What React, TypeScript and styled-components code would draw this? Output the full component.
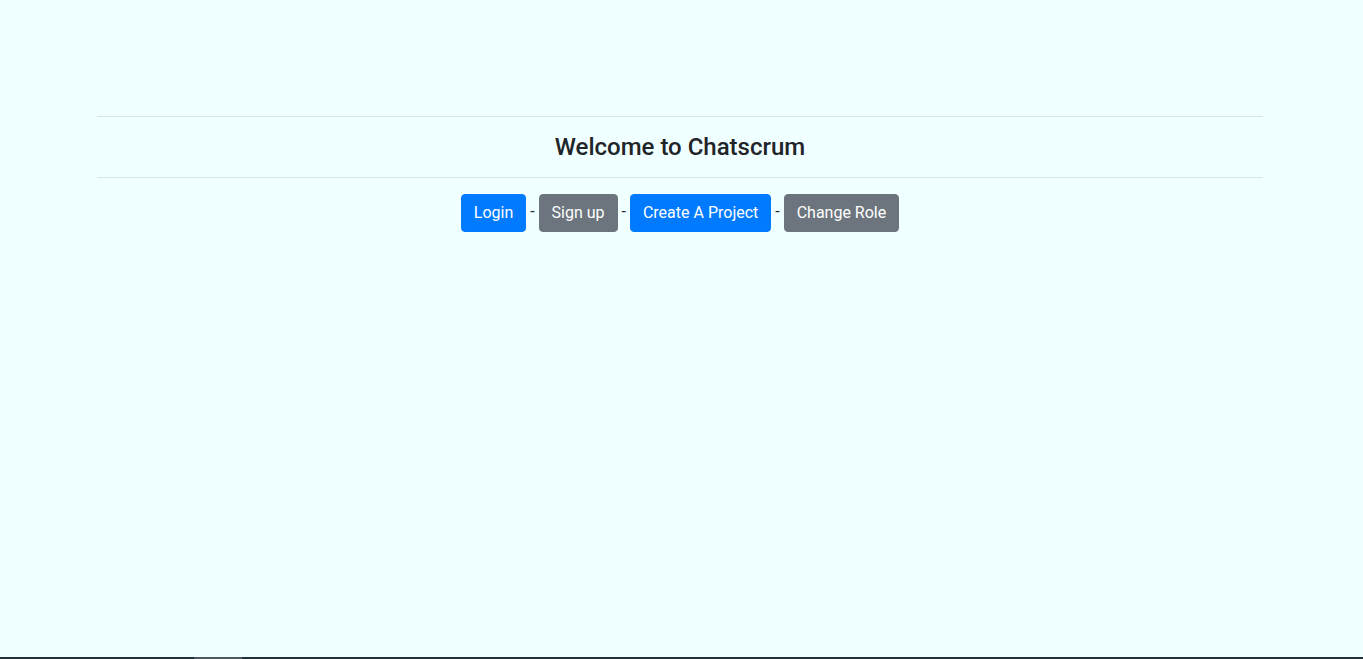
import React from "react";
import styled, { createGlobalStyle } from "styled-components";

const Global = createGlobalStyle`
  html, body { margin: 0; padding: 0; }
  body {
    background: #f0ffff;
    font-family: Roboto, "Liberation Sans", Arial, sans-serif;
    color: #212529;
    font-size: 16px;
    line-height: 1.5;
    min-height: 659px;
  }
`;

const Page = styled.main`
  padding: 116px 100px 0 97px;
`;

const Rule = styled.hr`
  margin: 0;
  border: 0;
  border-top: 1px solid rgba(0, 0, 0, 0.1);
`;

const Title = styled.h4`
  margin: 16px 0;
  font-size: 24px;
  font-weight: 500;
  line-height: 28px;
  text-align: center;
  color: #212529;
`;

const Actions = styled.div`
  margin-top: 16px;
  text-align: center;
  color: #212529;
`;

const Button = styled.a<{ $variant: "primary" | "secondary" }>`
  display: inline-block;
  padding: 6px 12px;
  font-size: 16px;
  line-height: 24px;
  font-weight: 400;
  color: #fff;
  border-radius: 4px;
  text-decoration: none;
  vertical-align: middle;
  background: ${(p) => (p.$variant === "primary" ? "#007bff" : "#6c757d")};
  border: 1px solid ${(p) => (p.$variant === "primary" ? "#007bff" : "#6c757d")};
  cursor: pointer;
`;

const BottomBar = styled.div`
  position: fixed;
  left: 0;
  right: 0;
  bottom: 0;
  height: 2px;
  background: #1f3036;
`;

const BottomThumb = styled.div`
  position: absolute;
  left: 194px;
  width: 48px;
  top: 0;
  bottom: 0;
  background: #4e5a60;
`;

export default function App() {
  return (
    <>
      <Global />
      <Page>
        <Rule />
        <Title>Welcome to Chatscrum</Title>
        <Rule />
        <Actions>
          <Button $variant="primary">Login</Button> -{" "}
          <Button $variant="secondary">Sign up</Button> -{" "}
          <Button $variant="primary">Create A Project</Button> -{" "}
          <Button $variant="secondary">Change Role</Button>
        </Actions>
      </Page>
      <BottomBar>
        <BottomThumb />
      </BottomBar>
    </>
  );
}
